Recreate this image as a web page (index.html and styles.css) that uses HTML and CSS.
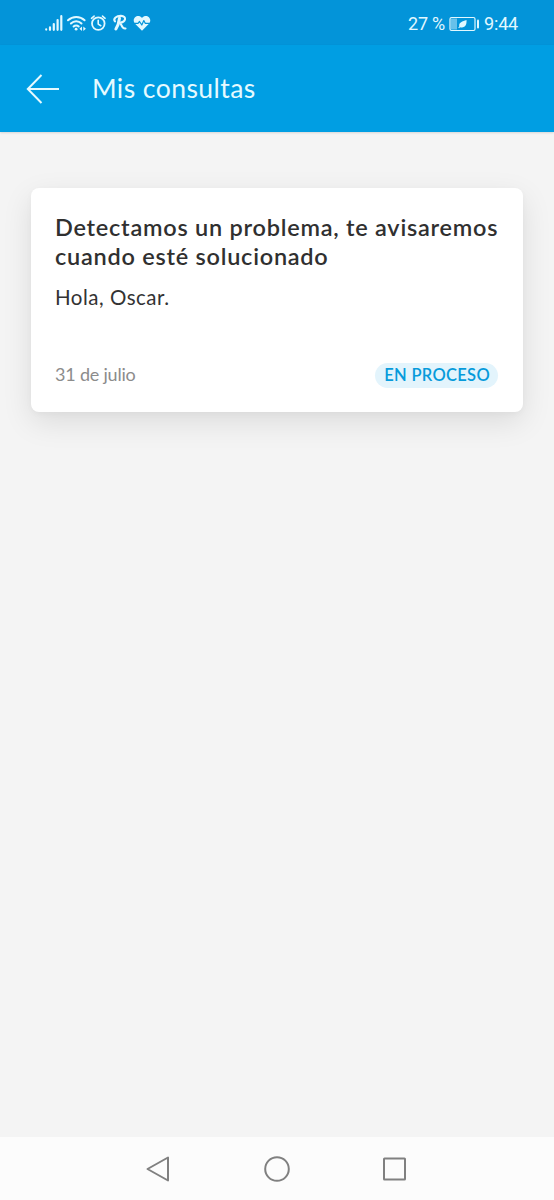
FILE: index.html
```html
<!DOCTYPE html>
<html lang="es">
<head>
<meta charset="utf-8">
<title>Mis consultas</title>
<link rel="stylesheet" href="styles.css">
</head>
<body>
<div class="screen">
  <div class="status">
    <svg class="status-icons" width="108" height="20" viewBox="44 13 108 20" fill="none" stroke="currentColor" stroke-width="1.8" stroke-linecap="round" stroke-linejoin="round">
      <g stroke-width="2.200"><path d="M46.200 29.400v.2M50 27.400v2.400M53.800 24v5.800M57.600 20v9.800M61.300 16.200v13.600"/></g>
      <path d="M68 20.300c4.600-4.500 12-4.500 16.600 0M70.900 23.500c3-3 7.600-3 10.600 0M73.600 26.500c1.400-1.500 3.700-1.500 5.100 0" stroke-width="2"/>
      <circle cx="76.100" cy="29.200" r="1.400" fill="currentColor" stroke="none"/>
      <path d="M82 26.500l-2.600 2.300 2.600 2.300zM83.300 26.500l2.600 2.300-2.600 2.300z" fill="currentColor" stroke="none"/>
      <circle cx="98.300" cy="23.600" r="6.300"/>
      <path d="M98.200 20.300v3.800l2.600 1.600M91.500 18.300l2.600-2.200M105.100 18.300l-2.600-2.200" stroke-width="1.600"/>
      <path d="M119.500 18.200c-.5 4-1.500 7.500-3.600 10.800" stroke-width="3"/>
      <path d="M115 21.500c-2.300-3.200 1.700-5.700 6-5.600 6.300.2 4.800 6.500-1.300 6.800 2 1 1.800 6.600 5.800 5.800" stroke-width="2.100"/>
      <path d="M142 30.700l-7.200-7.200c-3.700-4.800 3-10.500 7.200-5.500 4.200-5 10.900.7 7.200 5.500z" fill="currentColor" stroke="none"/>
      <path class="pulse" d="M133.500 23.300h4.500l1.500-1.800 2.300 3.500 2-4.500 1.400 2.800h5" stroke-width="1.2"/>
    </svg>
    <div class="status-right">
      <span class="percent">27 %</span>
      <svg class="battery" width="31" height="16" viewBox="0 0 31 16" fill="none" stroke="currentColor">
        <rect x="1" y="1.500" width="25" height="13" rx="1.500" stroke-width="1.200"/>
        <path d="M2 2.500h6v11H2z" fill="currentColor" stroke="none" opacity=".45"/>
        <path d="M29 4.500v7" stroke-width="2" stroke-linecap="round"/>
        <path d="M17.500 4c.4 5-1.400 8.300-6.500 7.200L10 12.200l-.7-.7 1-1C9.500 6 13.500 5.700 17.500 4z" fill="currentColor" stroke="none"/>
      </svg>
      <span class="clock">9:44</span>
    </div>
  </div>
  <header class="appbar">
    <svg width="34" height="30" viewBox="0 0 34 30" fill="none" stroke="currentColor" stroke-width="2"><path d="M15.500 1L1.800 15l13.700 14M1.800 15H33"/></svg>
    <h1 class="heading">Mis consultas</h1>
  </header>
  <main class="content">
    <article class="card">
      <h2 class="title">Detectamos un problema, te avisaremos<br>cuando esté solucionado</h2>
      <p class="message">Hola, Oscar.</p>
      <div class="meta">
        <span class="date">31 de julio</span>
        <span class="badge">EN PROCESO</span>
      </div>
    </article>
  </main>
  <nav class="navbar">
    <svg width="26" height="28" viewBox="0 0 26 28"><path d="M23 2.500v23L2.500 14z"/></svg>
    <svg width="26" height="28" viewBox="0 0 26 28"><circle cx="13" cy="14" r="11.800"/></svg>
    <svg width="26" height="28" viewBox="0 0 26 28"><rect x="2" y="3.500" width="21" height="21" rx=".5"/></svg>
  </nav>
</div>
</body>
</html>
```
FILE: styles.css
```css
* { box-sizing: border-box; }
body { margin: 0; }
.screen {
  width: 554px;
  height: 1200px;
  display: flex;
  flex-direction: column;
  background: #f4f4f4;
  font-family: Lato, "Open Sans", sans-serif;
}
.status {
  height: 45px;
  padding: 1px 36px 0 44px;
  display: flex;
  align-items: center;
  justify-content: space-between;
  background: #0394d9;
  color: #e2f8ff;
  font: 18px/20px Roboto, sans-serif;
}
.status-icons { display: block; }
.pulse { stroke: #0394d9; }
.status-right { display: flex; align-items: center; gap: 4px; padding-top: 1px; }
.percent { letter-spacing: -.2px; }
.clock { letter-spacing: -.2px; }
.battery { display: block; }
.appbar {
  height: 87px;
  padding-left: 26px;
  display: flex;
  align-items: center;
  gap: 32px;
  background: #009ee3;
  color: #e6faff;
  box-shadow: 0 1px 2px rgba(0, 0, 0, .12);
}
.heading { margin: 0; padding-bottom: 2px; font-size: 26.500px; line-height: 32px; font-weight: 400; letter-spacing: .45px; }
.content { flex: 1; padding: 56px 31px; }
.card {
  height: 224px;
  padding: 25px 25px 24px 24px;
  display: flex;
  flex-direction: column;
  border-radius: 8px;
  background: #fff;
  box-shadow: 0 10px 30px rgba(0, 0, 0, .1), 0 2px 6px rgba(0, 0, 0, .03);
}
.title { margin: 0; font-size: 23.500px; line-height: 29px; font-weight: 600; letter-spacing: .75px; color: #303030; white-space: nowrap; }
.message { margin: 14px 0 0; font-size: 20.500px; line-height: 24px; letter-spacing: .5px; color: #333; }
.meta { height: 25px; margin-top: auto; display: flex; align-items: center; justify-content: space-between; }
.date { padding-bottom: 3px; font-size: 18px; line-height: 24px; letter-spacing: -.2px; color: #8c8c8c; }
.badge {
  height: 25px;
  padding: 0 8px 0 9px;
  border-radius: 13px;
  background: #e3f4fc;
  color: #079bdb;
  font-size: 16.500px;
  line-height: 25px;
  font-weight: 600;
  letter-spacing: .3px;
}
.navbar {
  height: 63px;
  padding: 1px 146px 0 145px;
  display: flex;
  align-items: center;
  justify-content: space-between;
  background: #fcfcfc;
}
.navbar svg { fill: none; stroke: #808080; stroke-width: 2; stroke-linejoin: round; }
```
